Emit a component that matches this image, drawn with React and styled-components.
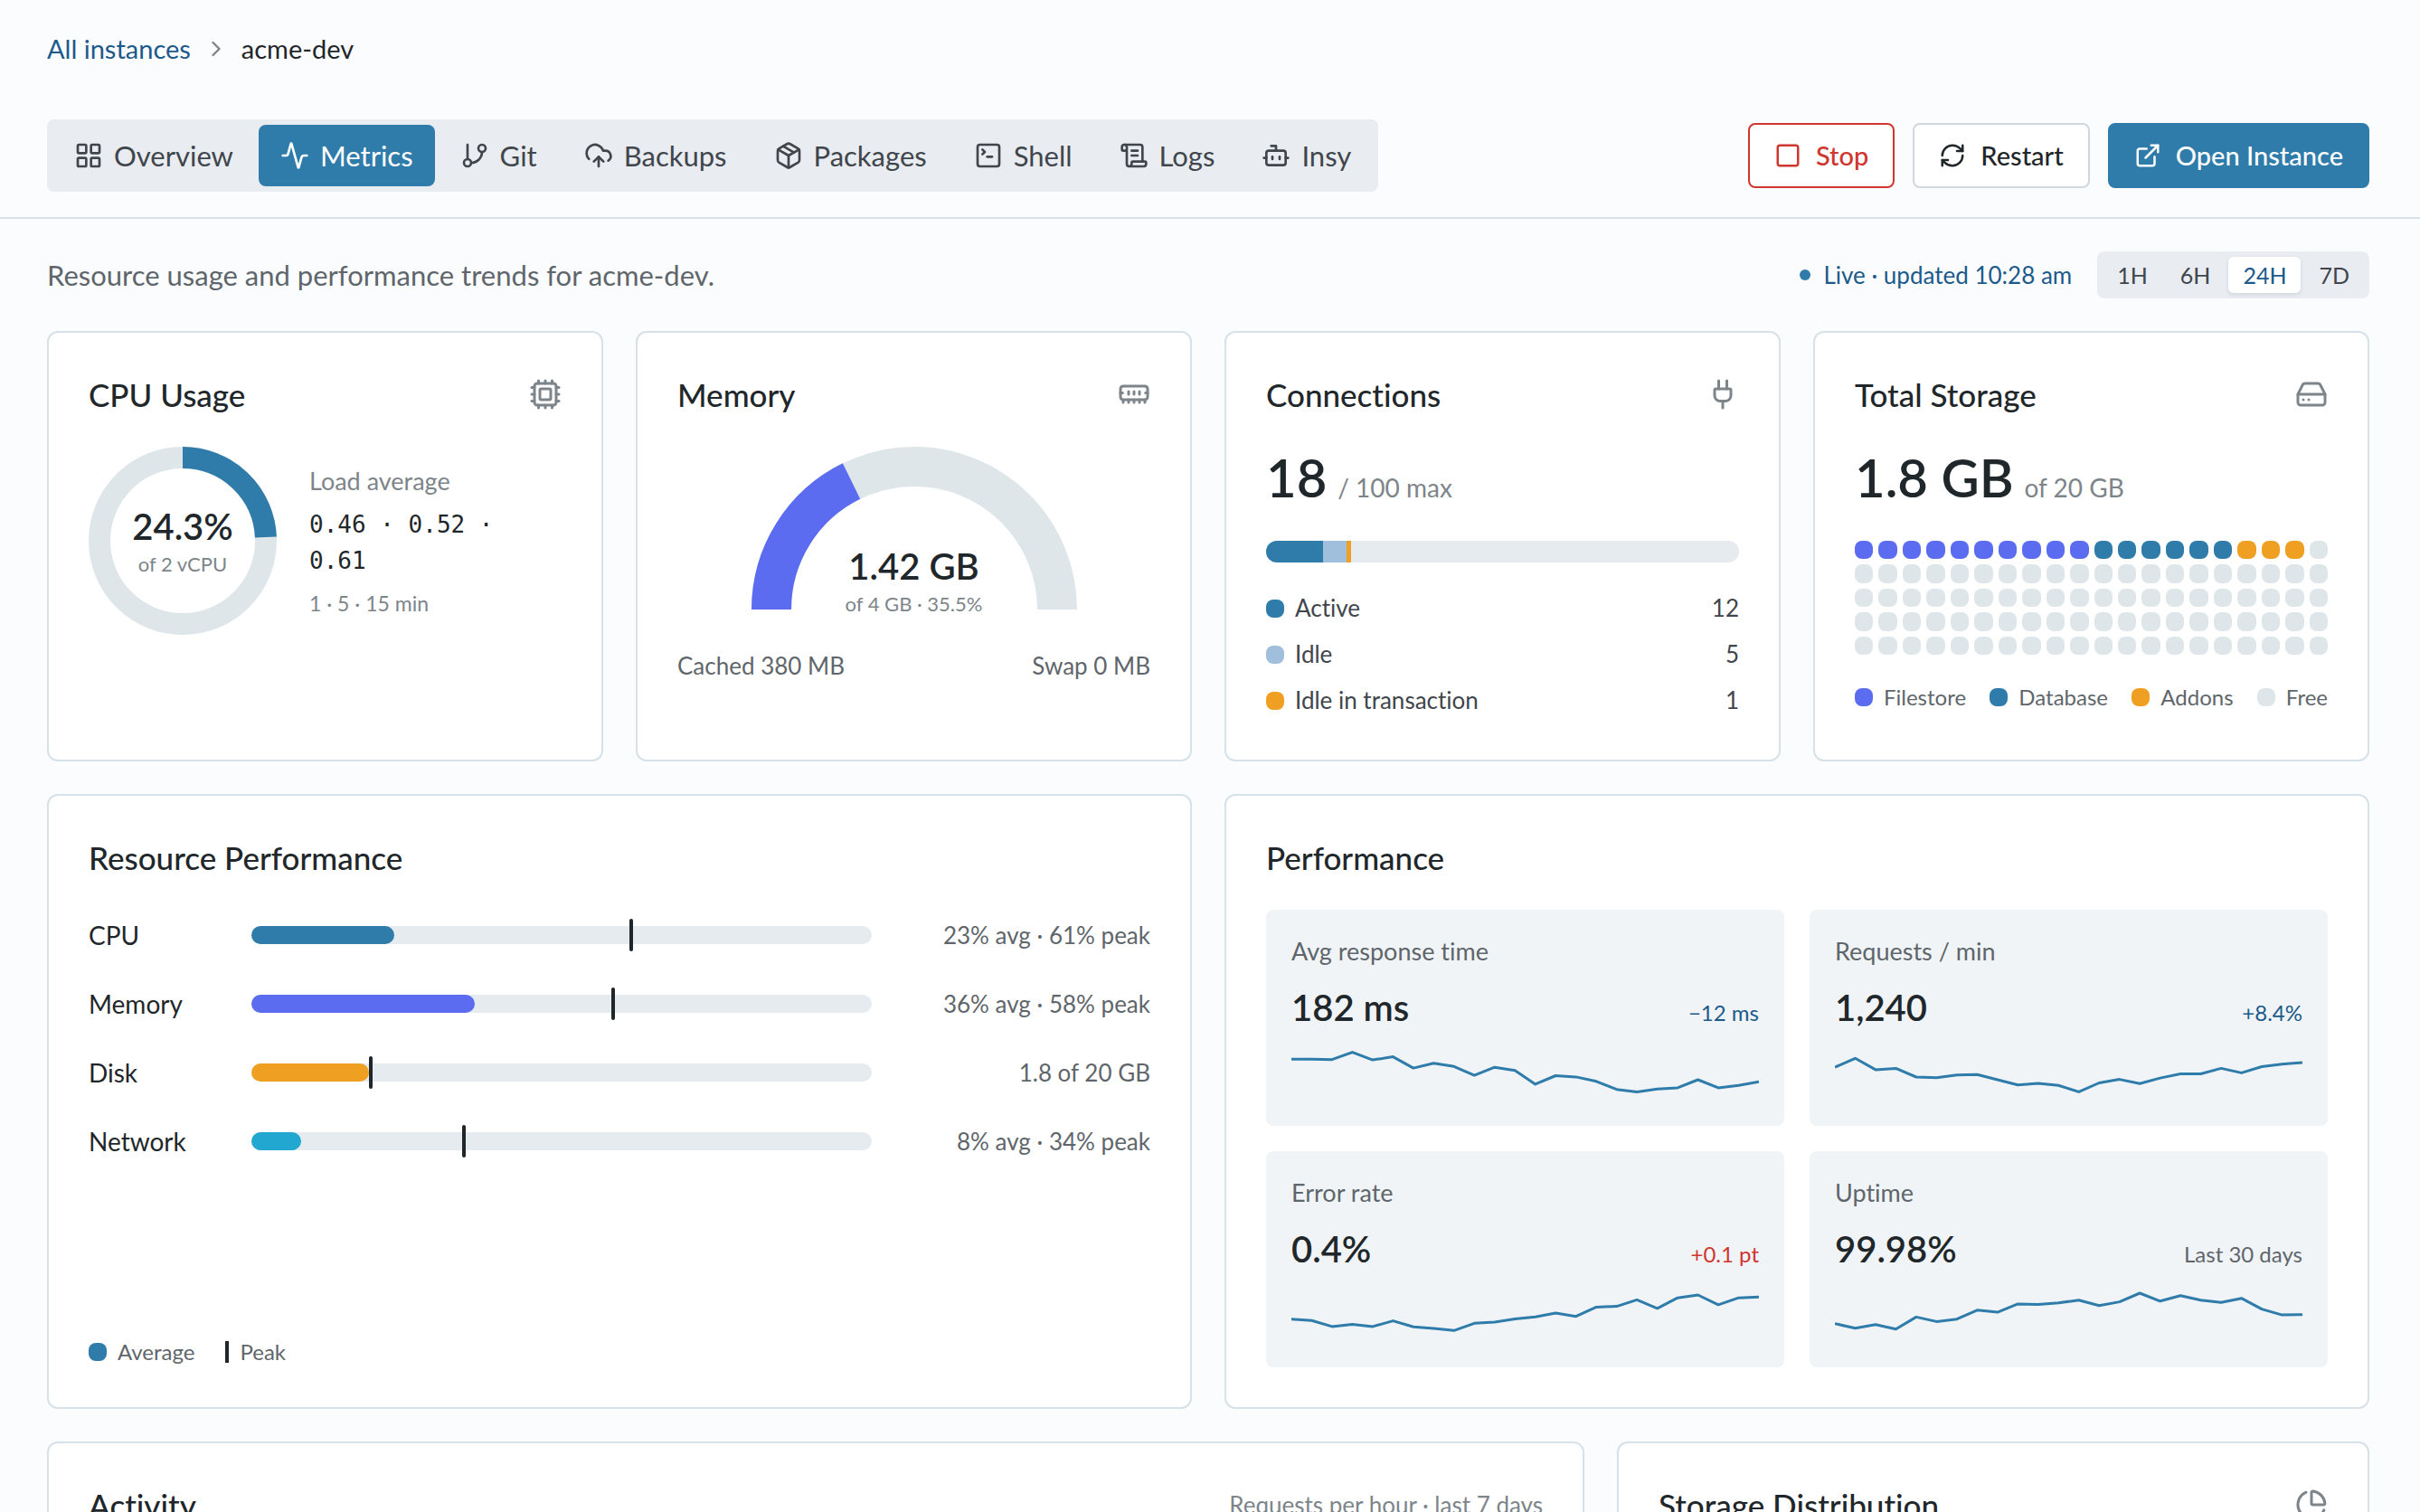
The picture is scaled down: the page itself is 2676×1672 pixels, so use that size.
import React from "react";
import styled, { createGlobalStyle } from "styled-components";
import {
  Activity, Bot, ChartPie, ChevronRight, CloudUpload, Cpu, ExternalLink, GitBranch,
  HardDrive, LayoutGrid, MemoryStick, Package, Plug, RefreshCw, ScrollText, Square,
  SquareTerminal,
} from "lucide-react";

const color = {
  page: "#fbfcfe",
  card: "#ffffff",
  border: "#d7e1e8",
  ink: "#1f272b",
  body: "#40464b",
  muted: "#5f666b",
  faint: "#7d858a",
  link: "#1b5a8a",
  blue: "#2f7cab",
  indigo: "#5b6cf0",
  orange: "#ef9f21",
  cyan: "#22a8d0",
  pale: "#9fbfdd",
  red: "#d0352f",
  ring: "#dfe6ea",
  track: "#e6ebef",
  control: "#e9ecf1",
  tile: "#f0f4f7",
};

const GlobalStyle = createGlobalStyle`
  *, *::before, *::after { box-sizing: border-box; }
  body {
    margin: 0;
    background: ${color.page};
    color: ${color.ink};
    font-family: Lato, "Open Sans", sans-serif;
    font-size: 26px;
    line-height: 36px;
    font-variant-ligatures: none;
  }
  h1, h2, p, ul, dl, dd { margin: 0; padding: 0; }
  ul { list-style: none; }
  button { font: inherit; color: inherit; cursor: pointer; }
  a { color: inherit; text-decoration: none; }
  svg { display: block; flex: none; }
`;

const Shell = styled.div`
  height: 100vh;
  overflow: hidden;
`;

const Header = styled.header`
  padding: 34px 56px 28px 52px;
  border-bottom: 2px solid ${color.border};
`;

const Breadcrumb = styled.nav`
  display: flex;
  align-items: center;
  gap: 14px;
  font-size: 29px;
  line-height: 40px;
  margin-bottom: 58px;
  svg { color: ${color.faint}; }
`;

const CrumbLink = styled.a`
  color: ${color.link};
`;

const Toolbar = styled.div`
  display: flex;
  align-items: center;
  justify-content: space-between;
`;

const Tabs = styled.nav`
  display: flex;
  gap: 4px;
  padding: 6px;
  border-radius: 8px;
  background: ${color.control};
`;

const Tab = styled.a`
  display: flex;
  align-items: center;
  gap: 12px;
  height: 68px;
  padding: 0 24px;
  border-radius: 8px;
  font-size: 31px;
  color: ${(p) => (p.$active ? "#ffffff" : color.body)};
  background: ${(p) => (p.$active ? color.blue : "transparent")};
`;

const Actions = styled.div`
  display: flex;
  gap: 20px;
`;

const tones = {
  danger: { fg: color.red, bg: "#ffffff", line: color.red },
  plain: { fg: color.ink, bg: "#ffffff", line: "#cfd8de" },
  primary: { fg: "#ffffff", bg: color.blue, line: color.blue },
};

const ActionButton = styled.button`
  display: flex;
  align-items: center;
  gap: 16px;
  height: 72px;
  padding: 0 27px;
  border: 2px solid ${(p) => tones[p.$tone].line};
  border-radius: 8px;
  background: ${(p) => tones[p.$tone].bg};
  color: ${(p) => tones[p.$tone].fg};
  font-size: 29px;
  font-weight: 500;
`;

const Main = styled.main`
  padding: 36px 56px 36px 52px;
`;

const Intro = styled.div`
  display: flex;
  align-items: center;
  justify-content: space-between;
  margin-bottom: 36px;
`;

const IntroText = styled.p`
  font-size: 31px;
  color: ${color.muted};
`;

const IntroTools = styled.div`
  display: flex;
  align-items: center;
  gap: 28px;
`;

const Live = styled.span`
  display: flex;
  align-items: center;
  gap: 14px;
  color: ${color.link};
  &::before {
    content: "";
    width: 12px;
    height: 12px;
    border-radius: 50%;
    background: ${color.blue};
  }
`;

const Ranges = styled.div`
  display: flex;
  gap: 4px;
  padding: 6px;
  border-radius: 8px;
  background: ${color.control};
`;

const RangeButton = styled.button`
  height: 40px;
  padding: 0 16px;
  border: 0;
  border-radius: 6px;
  font-size: 25px;
  background: ${(p) => (p.$active ? "#ffffff" : "transparent")};
  color: ${(p) => (p.$active ? color.link : color.body)};
  box-shadow: ${(p) => (p.$active ? "0 2px 4px rgba(31, 60, 80, 0.12)" : "none")};
`;

const Grid = styled.div`
  display: grid;
  grid-template-columns: repeat(12, 1fr);
  gap: 36px;
`;

const Card = styled.section`
  grid-column: span ${(p) => p.$span};
  display: flex;
  flex-direction: column;
  min-width: 0;
  min-height: ${(p) => p.$minHeight}px;
  padding: 44px;
  border: 2px solid ${color.border};
  border-radius: 12px;
  background: ${color.card};
`;

const CardHead = styled.header`
  display: flex;
  align-items: center;
  justify-content: space-between;
  margin-bottom: 34px;
  color: ${color.faint};
`;

const CardTitle = styled.h2`
  font-size: 35px;
  line-height: 48px;
  font-weight: 500;
  color: ${color.ink};
`;

const CpuBody = styled.div`
  display: flex;
  align-items: center;
  gap: 36px;
`;

const ChartFrame = styled.div`
  display: grid;
  flex: none;
  justify-content: center;
  min-height: ${(p) => p.$height}px;
  > * { grid-area: 1 / 1; }
`;

const ChartLabel = styled.div`
  display: flex;
  flex-direction: column;
  align-items: center;
  align-self: ${(p) => p.$align};
  padding-top: 4px;
`;

const Figure = styled.strong`
  font-size: 40px;
  line-height: 48px;
  font-weight: 600;
`;

const FigureNote = styled.span`
  font-size: 22px;
  line-height: 36px;
  color: ${color.faint};
`;

const Load = styled.div`
  display: flex;
  flex-direction: column;
  gap: 10px;
  min-width: 0;
  padding-top: 2px;
  font-size: 27px;
  color: ${color.faint};
`;

const LoadValues = styled.span`
  font-family: "DejaVu Sans Mono", "Liberation Mono", monospace;
  font-size: 26px;
  line-height: 40px;
  color: ${color.ink};
`;

const Small = styled.span`
  font-size: 23px;
  line-height: 34px;
`;

const SplitRow = styled.div`
  display: flex;
  justify-content: space-between;
  margin-top: 32px;
  color: ${color.muted};
`;

const Total = styled.p`
  display: flex;
  align-items: baseline;
  gap: 12px;
  margin-bottom: 36px;
`;

const TotalValue = styled.strong`
  font-size: 58px;
  line-height: 68px;
  font-weight: 600;
`;

const TotalNote = styled.span`
  font-size: 28px;
  color: ${color.faint};
`;

const StackBar = styled.div`
  display: flex;
  height: 24px;
  margin-bottom: 32px;
  border-radius: 12px;
  overflow: hidden;
  background: ${color.track};
`;

const StackPart = styled.span`
  width: ${(p) => p.$value}%;
  background: ${(p) => p.$color};
`;

const CountList = styled.dl`
  display: flex;
  flex-direction: column;
  gap: 14px;
  color: ${color.body};
`;

const CountRow = styled.div`
  display: flex;
  justify-content: space-between;
  line-height: 37px;
`;

const Key = styled.dt`
  display: flex;
  align-items: center;
  gap: 12px;
`;

const Swatch = styled.span`
  flex: none;
  width: 20px;
  height: 20px;
  border-radius: 8px;
  background: ${(p) => p.$color};
`;

const BlockGrid = styled.div`
  display: grid;
  grid-template-columns: repeat(20, 1fr);
  gap: 6px;
  margin-bottom: 30px;
`;

const Block = styled.span`
  aspect-ratio: 1;
  border-radius: 8px;
  background: ${(p) => p.$color};
`;

const Legend = styled.ul`
  display: flex;
  justify-content: ${(p) => (p.$spread ? "space-between" : "flex-start")};
  gap: 4px ${(p) => (p.$spread ? 8 : 34)}px;
  margin-top: ${(p) => (p.$spread ? "0" : "auto")};
  font-size: 24px;
  line-height: 34px;
  color: ${color.muted};
`;

const LegendItem = styled.li`
  display: flex;
  align-items: center;
  gap: 12px;
`;

const PeakKey = styled.span`
  width: 4px;
  height: 24px;
  background: ${color.ink};
`;

const Meters = styled.dl`
  display: flex;
  flex-direction: column;
  gap: 20px;
`;

const Meter = styled.div`
  display: grid;
  grid-template-columns: 144px 1fr 272px;
  column-gap: 36px;
  align-items: center;
  min-height: 56px;
`;

const MeterName = styled.dt`
  font-size: 28px;
`;

const MeterTrack = styled.dd`
  position: relative;
  height: 20px;
  border-radius: 10px;
  background: ${color.track};
`;

const MeterFill = styled.div`
  width: ${(p) => p.$value}%;
  height: 100%;
  border-radius: 10px;
  background: ${(p) => p.$color};
`;

const MeterPeak = styled.span`
  position: absolute;
  top: -8px;
  left: ${(p) => p.$value}%;
  width: 4px;
  height: 36px;
  border-radius: 2px;
  background: ${color.ink};
`;

const MeterText = styled.dd`
  text-align: right;
  color: ${color.muted};
`;

const Tiles = styled.div`
  flex: 1;
  display: grid;
  grid-template-columns: 1fr 1fr;
  grid-auto-rows: 1fr;
  gap: 28px;
`;

const Tile = styled.article`
  display: flex;
  flex-direction: column;
  padding: 28px;
  border-radius: 8px;
  background: ${color.tile};
`;

const TileLabel = styled.span`
  font-size: 27px;
  color: ${color.muted};
`;

const TileRow = styled.div`
  display: flex;
  align-items: baseline;
  justify-content: space-between;
  margin-top: 20px;
  line-height: 48px;
`;

const Delta = styled.span`
  font-size: 24px;
  color: ${(p) => p.$color};
`;

const Spark = styled.svg`
  width: 100%;
  height: 60px;
  margin-top: auto;
`;

function Sparkline({ values }) {
  const points = values.map((v, i) => `${i * 10},${v}`).join(" ");
  return (
    <Spark viewBox="0 0 230 600" preserveAspectRatio="none" aria-hidden="true">
      <polyline points={points} fill="none" stroke={color.blue} strokeWidth="3"
        strokeLinejoin="round" vectorEffect="non-scaling-stroke" />
    </Spark>
  );
}

function Donut({ percent }) {
  return (
    <svg width="208" height="208" viewBox="0 0 208 208" aria-hidden="true">
      <circle cx="104" cy="104" r="92" fill="none" stroke={color.ring} strokeWidth="24" />
      <circle cx="104" cy="104" r="92" fill="none" stroke={color.blue} strokeWidth="24"
        pathLength="100" strokeDasharray={`${percent} 100`} transform="rotate(-90 104 104)" />
    </svg>
  );
}

function Gauge({ percent }) {
  const arc = "M22 180a158 158 0 0 1 316 0";
  return (
    <svg width="360" height="180" viewBox="0 0 360 180" aria-hidden="true">
      <path d={arc} fill="none" stroke={color.ring} strokeWidth="44" />
      <path d={arc} fill="none" stroke={color.indigo} strokeWidth="44"
        pathLength="100" strokeDasharray={`${percent} 100`} />
    </svg>
  );
}

const tabs = [
  ["Overview", LayoutGrid],
  ["Metrics", Activity],
  ["Git", GitBranch],
  ["Backups", CloudUpload],
  ["Packages", Package],
  ["Shell", SquareTerminal],
  ["Logs", ScrollText],
  ["Insy", Bot],
];

const connections = [
  ["Active", 12, color.blue],
  ["Idle", 5, color.pale],
  ["Idle in transaction", 1, color.orange],
];

const storage = [
  ["Filestore", 10, color.indigo],
  ["Database", 6, color.blue],
  ["Addons", 3, color.orange],
  ["Free", 81, color.ring],
];

const meters = [
  ["CPU", 23, 61, color.blue, "23% avg · 61% peak"],
  ["Memory", 36, 58, color.indigo, "36% avg · 58% peak"],
  ["Disk", 19, 19, color.orange, "1.8 of 20 GB"],
  ["Network", 8, 34, color.cyan, "8% avg · 34% peak"],
];

const tiles = [
  {
    label: "Avg response time", value: "182 ms", delta: "−12 ms", tint: color.link,
    values: [142, 142, 147, 66, 151, 116, 241, 187, 223, 321, 232, 267, 419, 325, 339, 388, 477, 504, 473, 459, 370, 459, 433, 392],
  },
  {
    label: "Requests / min", value: "1,240", delta: "+8.4%", tint: color.link,
    values: [232, 133, 259, 244, 340, 347, 317, 313, 370, 428, 409, 432, 504, 405, 366, 412, 351, 305, 305, 244, 294, 225, 198, 179],
  },
  {
    label: "Error rate", value: "0.4%", delta: "+0.1 pt", tint: color.red,
    values: [348, 362, 429, 406, 429, 366, 433, 451, 473, 393, 380, 344, 322, 281, 317, 214, 206, 134, 228, 112, 80, 188, 112, 103],
  },
  {
    label: "Uptime", value: "99.98%", delta: "Last 30 days", tint: color.muted,
    values: [397, 447, 408, 458, 324, 374, 347, 248, 271, 179, 186, 167, 137, 198, 156, 60, 148, 87, 137, 163, 117, 236, 301, 297],
  },
];

function Heading({ title, icon: Icon, children }) {
  return (
    <CardHead>
      <CardTitle>{title}</CardTitle>
      {Icon && <Icon size={36} aria-hidden="true" />}
      {children}
    </CardHead>
  );
}

export default function App() {
  return (
    <Shell>
      <GlobalStyle />
      <Header>
        <Breadcrumb aria-label="Breadcrumb">
          <CrumbLink href="#instances">All instances</CrumbLink>
          <ChevronRight size={28} aria-hidden="true" />
          <span aria-current="page">acme-dev</span>
        </Breadcrumb>
        <Toolbar>
          <Tabs aria-label="Instance sections">
            {tabs.map(([name, Icon]) => (
              <Tab key={name} href={`#${name.toLowerCase()}`} $active={name === "Metrics"}
                aria-current={name === "Metrics" ? "page" : undefined}>
                <Icon size={32} aria-hidden="true" />
                {name}
              </Tab>
            ))}
          </Tabs>
          <Actions>
            <ActionButton type="button" $tone="danger"><Square size={30} />Stop</ActionButton>
            <ActionButton type="button" $tone="plain"><RefreshCw size={30} />Restart</ActionButton>
            <ActionButton type="button" $tone="primary"><ExternalLink size={30} />Open Instance</ActionButton>
          </Actions>
        </Toolbar>
      </Header>

      <Main>
        <Intro>
          <IntroText>Resource usage and performance trends for acme-dev.</IntroText>
          <IntroTools>
            <Live>Live · updated 10:28 am</Live>
            <Ranges role="group" aria-label="Time range">
              {["1H", "6H", "24H", "7D"].map((r) => (
                <RangeButton key={r} type="button" $active={r === "24H"} aria-pressed={r === "24H"}>
                  {r}
                </RangeButton>
              ))}
            </Ranges>
          </IntroTools>
        </Intro>

        <Grid>
          <Card $span={3} $minHeight={476}>
            <Heading title="CPU Usage" icon={Cpu} />
            <CpuBody>
              <ChartFrame $height={208}>
                <Donut percent={24.3} />
                <ChartLabel $align="center">
                  <Figure>24.3%</Figure>
                  <FigureNote>of 2 vCPU</FigureNote>
                </ChartLabel>
              </ChartFrame>
              <Load>
                <span>Load average</span>
                <LoadValues>0.46 · 0.52 · 0.61</LoadValues>
                <Small>1 · 5 · 15 min</Small>
              </Load>
            </CpuBody>
          </Card>

          <Card $span={3} $minHeight={476}>
            <Heading title="Memory" icon={MemoryStick} />
            <ChartFrame $height={192}>
              <Gauge percent={35.5} />
              <ChartLabel $align="end">
                <Figure>1.42 GB</Figure>
                <FigureNote>of 4 GB · 35.5%</FigureNote>
              </ChartLabel>
            </ChartFrame>
            <SplitRow>
              <span>Cached 380 MB</span>
              <span>Swap 0 MB</span>
            </SplitRow>
          </Card>

          <Card $span={3} $minHeight={476}>
            <Heading title="Connections" icon={Plug} />
            <Total><TotalValue>18</TotalValue><TotalNote>/ 100 max</TotalNote></Total>
            <StackBar>
              {connections.map(([name, n, c]) => <StackPart key={name} $value={n} $color={c} />)}
            </StackBar>
            <CountList>
              {connections.map(([name, n, c]) => (
                <CountRow key={name}>
                  <Key><Swatch $color={c} />{name}</Key>
                  <dd>{n}</dd>
                </CountRow>
              ))}
            </CountList>
          </Card>

          <Card $span={3} $minHeight={476}>
            <Heading title="Total Storage" icon={HardDrive} />
            <Total><TotalValue>1.8 GB</TotalValue><TotalNote>of 20 GB</TotalNote></Total>
            <BlockGrid aria-hidden="true">
              {storage.flatMap(([name, n, c]) =>
                Array.from({ length: n }, (_, i) => <Block key={name + i} $color={c} />)
              )}
            </BlockGrid>
            <Legend $spread>
              {storage.map(([name, , c]) => (
                <LegendItem key={name}><Swatch $color={c} />{name}</LegendItem>
              ))}
            </Legend>
          </Card>

          <Card $span={6} $minHeight={680}>
            <Heading title="Resource Performance" />
            <Meters>
              {meters.map(([name, avg, peak, c, text]) => (
                <Meter key={name}>
                  <MeterName>{name}</MeterName>
                  <MeterTrack>
                    <MeterFill $value={avg} $color={c} />
                    <MeterPeak $value={peak} />
                  </MeterTrack>
                  <MeterText>{text}</MeterText>
                </Meter>
              ))}
            </Meters>
            <Legend>
              <LegendItem><Swatch $color={color.blue} />Average</LegendItem>
              <LegendItem><PeakKey />Peak</LegendItem>
            </Legend>
          </Card>

          <Card $span={6} $minHeight={680}>
            <Heading title="Performance" />
            <Tiles>
              {tiles.map((t) => (
                <Tile key={t.label}>
                  <TileLabel>{t.label}</TileLabel>
                  <TileRow>
                    <Figure>{t.value}</Figure>
                    <Delta $color={t.tint}>{t.delta}</Delta>
                  </TileRow>
                  <Sparkline values={t.values} />
                </Tile>
              ))}
            </Tiles>
          </Card>

          <Card $span={8} $minHeight={480}>
            <Heading title="Activity"><span>Requests per hour · last 7 days</span></Heading>
          </Card>

          <Card $span={4} $minHeight={480}>
            <Heading title="Storage Distribution" icon={ChartPie} />
          </Card>
        </Grid>
      </Main>
    </Shell>
  );
}
